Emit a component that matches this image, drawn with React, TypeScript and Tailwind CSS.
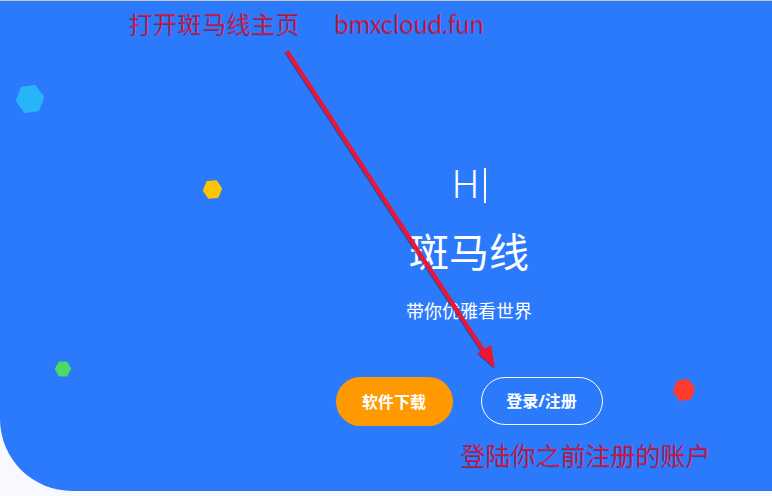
import React from 'react';

const Hex = ({ className, color }: { className: string; color: string }) => (
  <svg className={className} viewBox="0 0 100 100">
    <polygon
      points="27,8 73,8 96,50 73,92 27,92 4,50"
      fill={color}
      stroke={color}
      strokeWidth="10"
      strokeLinejoin="round"
    />
  </svg>
);

export default function App() {
  return (
    <div className="w-[772px] h-[496px] overflow-hidden bg-[#f7f9ff] font-['Noto_Sans','Noto_Sans_CJK_SC',sans-serif]">
      <div className="relative h-[491px] bg-[#2c7afc] border-t border-[#c4c4c4] rounded-bl-[72px] pl-[166px]">
        {/* floating hexagons */}
        <Hex className="absolute left-[16px] top-[84px] w-[28px] h-[28px] rotate-[-8deg]" color="#27b4f9" />
        <Hex className="absolute left-[203px] top-[179px] w-[19px] h-[19px] rotate-[-6deg]" color="#fdc500" />
        <Hex className="absolute left-[55px] top-[360px] w-[16px] h-[16px]" color="#4cd964" />
        <Hex className="absolute left-[673px] top-[378px] w-[22px] h-[22px] rotate-[-8deg]" color="#ff3b30" />

        <div className="flex flex-col items-center text-white pt-[163px]">
          <div className="text-[38px] font-light leading-none h-[44px] flex items-start">
            <span>H</span>
            <span className="ml-[5px] inline-block w-[2px] h-[35px] mt-[4px] bg-white" />
          </div>
          <h1 className="mt-[24px] text-[40px] font-normal leading-none">斑马线</h1>
          <p className="mt-[30px] text-[18px] leading-none">带你优雅看世界</p>
          <div className="mt-[57px] flex gap-[28px]">
            <button className="w-[117px] h-[49px] rounded-full bg-[#ff9900] text-[16px] font-bold text-white">
              软件下载
            </button>
            <button className="w-[122px] h-[48px] rounded-full border border-white text-[16px] font-bold text-white">
              登录/注册
            </button>
          </div>
        </div>

        {/* annotations */}
        <div className="absolute left-[129px] top-[4px] text-[24px] font-light text-[#ea1230] [text-shadow:-1px_1px_0_rgba(90,30,90,0.7)] flex gap-[34px] font-['Noto_Sans_CJK_SC',sans-serif]">
          <span className="tracking-[0.5px]">打开斑马线主页</span>
          <span>bmxcloud.fun</span>
        </div>
        <svg className="absolute left-0 top-0 w-[772px] h-[491px] pointer-events-none" viewBox="0 0 772 491">
          <g transform="translate(-1,1)" opacity="0.6">
            <line x1="287" y1="50" x2="487" y2="355" stroke="#5a2060" strokeWidth="4" />
            <polygon points="495,367 478,352 491,344" fill="#5a2060" />
          </g>
          <line x1="287" y1="50" x2="487" y2="355" stroke="#f0142f" strokeWidth="4" />
          <polygon points="495,367 478,352 491,344" fill="#f0142f" />
        </svg>
        <div className="absolute left-[461px] top-[435px] text-[25px] font-light text-[#ea1230] [text-shadow:-1px_1px_0_rgba(90,30,90,0.7)] font-['Noto_Sans_CJK_SC',sans-serif]">
          登陆你之前注册的账户
        </div>
      </div>
    </div>
  );
}
